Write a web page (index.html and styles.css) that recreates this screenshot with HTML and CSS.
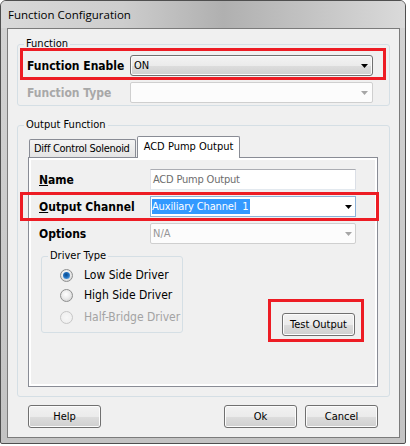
FILE: index.html
```html
<!DOCTYPE html>
<html>
<head>
<meta charset="utf-8">
<title>Function Configuration</title>
<link rel="stylesheet" href="styles.css">
</head>
<body>
<div class="window">
  <div class="titlebar"><span class="title">Function Configuration</span></div>
  <div class="client">
    <fieldset class="group g-func">
      <legend>Function</legend>
      <div class="frow frow-first hl">
        <span class="blabel">Function Enable</span>
        <div class="combo combo-btn"><span class="ctext">ON</span><svg class="arrow" width="7" height="4" viewBox="0 0 7 4"><path d="M0 0H7L3.5 4Z" fill="#000"/></svg></div>
      </div>
      <div class="frow frow-second">
        <span class="blabel dis">Function Type</span>
        <div class="combo combo-dis"><span class="ctext"></span><svg class="arrow" width="7" height="4" viewBox="0 0 7 4"><path d="M0 0H7L3.5 4Z" fill="#a6a6a6"/></svg></div>
      </div>
    </fieldset>

    <fieldset class="group g-out">
      <legend>Output Function</legend>
      <div class="tabs">
        <div class="tab">Diff Control Solenoid</div>
        <div class="tab active">ACD Pump Output</div>
      </div>
      <div class="panel">
        <div class="page">
          <div class="prow prow-name">
            <span class="plabel"><u>N</u>ame</span>
            <div class="textbox">ACD Pump Output</div>
          </div>
          <div class="prow prow-hl hl">
            <span class="plabel"><u>O</u>utput Channel</span>
            <div class="combo combo-edit"><span class="sel">Auxiliary Channel  1</span><svg class="arrow" width="7" height="4" viewBox="0 0 7 4"><path d="M0 0H7L3.5 4Z" fill="#000"/></svg></div>
          </div>
          <div class="prow prow-opt">
            <span class="plabel">Options</span>
            <div class="combo combo-dis combo-opt"><span class="ctext gray">N/A</span><svg class="arrow" width="7" height="4" viewBox="0 0 7 4"><path d="M0 0H7L3.5 4Z" fill="#a6a6a6"/></svg></div>
          </div>
          <div class="lower">
            <fieldset class="group driver">
              <legend>Driver Type</legend>
              <div class="radio r1"><span class="rb on"></span><span>Low Side Driver</span></div>
              <div class="radio r2"><span class="rb"></span><span>High Side Driver</span></div>
              <div class="radio r3 dis"><span class="rb off"></span><span>Half-Bridge Driver</span></div>
            </fieldset>
            <div class="testwrap hl">
              <button class="btn">Test Output</button>
            </div>
          </div>
        </div>
      </div>
    </fieldset>

    <div class="buttons">
      <button class="btn">Help</button>
      <span class="spacer"></span>
      <button class="btn">Ok</button>
      <button class="btn btn-gap">Cancel</button>
    </div>
  </div>
</div>
</body>
</html>
```

FILE: styles.css
```css
* { box-sizing: border-box; }
html, body { margin: 0; padding: 0; background: #fff; }
body {
  font-family: "DejaVu Sans Condensed", "DejaVu Sans", sans-serif;
  font-stretch: condensed;
  font-size: 11px;
  color: #000;
}

.window {
  width: 406px;
  height: 444px;
  border: 1px solid #4f4f4f;
  border-radius: 6px 6px 2px 2px;
  background: linear-gradient(#d3d3d3, #c3c3c3);
  padding: 0 5px 5px 6px;
  display: flex;
  flex-direction: column;
}

.titlebar {
  height: 27px;
  margin: 0 -5px 0 -6px;
  padding-left: 7px;
  border-radius: 5px 5px 0 0;
  background: linear-gradient(90deg, #d9d9d9 0%, #cdcdcd 30%, #b0b0b0 55%, #c2c2c2 75%, #dadada 100%);
  display: flex;
  align-items: center;
}
.title {
  font-family: "Open Sans", "Noto Sans", sans-serif;
  font-stretch: normal;
  font-size: 11.5px;
  line-height: 27px;
  color: #000;
}

.client {
  height: 410px;
  border: 1px solid #7b7b7b;
  background: #f0f0f0;
  display: flex;
  flex-direction: column;
}

.group {
  border: 1px solid #d5dfe5;
  border-radius: 3px;
  margin: 0;
  padding: 0;
  min-width: 0;
}
.group legend {
  padding: 0 2px;
  margin-left: 6px;
  font-size: 11px;
  line-height: 14px;
}

.hl { border: 3px solid #ed1c24; }

.g-func { margin: 8px 9px 0 9px; padding-bottom: 2px; }
.frow { display: flex; align-items: center; }
.frow-first { margin: -3px 3px 0 2px; padding: 4px 10px 1px 4px; }
.frow-second { margin: 0 3px 0 2px; padding: 2px 13px 0 7px; }

.blabel {
  width: 103px;
  flex: none;
  font-weight: bold;
  font-size: 12px;
}
.blabel.dis { color: #a8a8a8; }

.combo {
  flex: 1;
  height: 21px;
  display: flex;
  align-items: center;
  justify-content: space-between;
  padding: 0 4px 0 3px;
}
.combo-btn {
  border: 1px solid #707070;
  border-radius: 3px;
  background: linear-gradient(#f3f3f3 0%, #ebebeb 50%, #dddddd 51%, #d0d0d0 100%);
  box-shadow: inset 0 0 0 1px #fbfbfb;
}
.combo-dis {
  border: 1px solid #cfcfcf;
  border-radius: 2px;
  background: #fcfcfc;
}
.combo-edit {
  border: 1px solid #8db2d8;
  background: #fff;
  padding: 0 3px 0 1px;
}
.combo-opt { padding: 0 3px 0 2px; }
.ctext.gray { color: #969696; }
.sel {
  background: #3399ff;
  color: #fff;
  white-space: pre;
  line-height: 15px;
  padding-right: 1px;
  letter-spacing: -0.15px;
}
.arrow { flex: none; display: block; }

.g-out { margin: 12px 9px 0 9px; padding-bottom: 9px; }

.tabs {
  display: flex;
  align-items: flex-end;
  height: 21px;
  margin: 4px 11px 0 10px;
}
.tab {
  height: 18px;
  width: 107px;
  margin-left: 1px;
  border: 1px solid #898c95;
  border-bottom: none;
  border-radius: 2px 2px 0 0;
  padding-left: 4px;
  line-height: 17px;
  background: linear-gradient(#f4f4f4, #e4e4e4);
  white-space: nowrap;
  letter-spacing: -0.3px;
}
.tab.active {
  height: 22px;
  width: 103px;
  margin-bottom: -1px;
  padding: 0;
  line-height: 20px;
  text-align: center;
  background: #fff;
  position: relative;
  z-index: 1;
  letter-spacing: 0;
}

.panel {
  margin: 0 11px 0 10px;
  border: 1px solid #898c95;
  background: #fff;
  padding: 2px;
}
.page {
  height: 224px;
  background: #f0f0f0;
}

.prow { display: flex; align-items: center; padding: 0 19px 0 8px; }
.prow-name { padding-top: 9px; }
.prow-hl { margin: 2px -4px 0 -11px; padding: 1px 20px 1px 16px; }
.prow-opt { margin-top: 2px; }
.plabel {
  width: 111px;
  flex: none;
  font-weight: bold;
  font-size: 12px;
}
.textbox {
  flex: 1;
  height: 21px;
  border: 1px solid;
  border-color: #abadb3 #dbdfe6 #e3e9ef #e2e3ea;
  background: #fff;
  color: #6d6d6d;
  padding-left: 2px;
  line-height: 19px;
  letter-spacing: -0.2px;
}

.lower { display: flex; align-items: flex-start; margin-top: 5px; }
.driver { margin-left: 10px; width: 142px; padding-bottom: 5px; }
.radio {
  display: flex;
  align-items: center;
  height: 20px;
  padding-left: 18px;
  font-size: 12px;
  white-space: nowrap;
}
.radio.r1 { margin-top: 2px; }
.radio.r3 { margin-top: 2px; }
.radio.dis { color: #a3a3a3; }
.rb {
  width: 13px;
  height: 13px;
  flex: none;
  margin-right: 11px;
  border-radius: 50%;
  border: 1px solid #8e8f8f;
  background: radial-gradient(circle at 45% 40%, #ffffff 0%, #ececec 45%, #c8c8c8 100%);
  display: flex;
  align-items: center;
  justify-content: center;
}
.rb.on::after {
  content: "";
  width: 7px;
  height: 7px;
  border-radius: 50%;
  background: radial-gradient(circle at 45% 40%, #0d4a86 0%, #1f6fc0 45%, #7fbcea 100%);
}
.rb.off {
  border-color: #c6c6c6;
  background: radial-gradient(circle, #f7f7f7 0%, #ececec 100%);
}

.testwrap {
  margin: 50px 0 0 85px;
  padding: 11px 6px 3px 11px;
}

.btn {
  width: 73px;
  height: 23px;
  border: 1px solid #707070;
  border-radius: 3px;
  background: linear-gradient(#f2f2f2 0%, #ebebeb 50%, #dddddd 51%, #cfcfcf 100%);
  box-shadow: inset 0 0 0 1px #fcfcfc;
  font: inherit;
  color: #000;
  padding: 0;
  display: flex;
  align-items: center;
  justify-content: center;
  flex: none;
}

.buttons {
  display: flex;
  margin-top: 8px;
  padding: 0 21px 0 20px;
}
.spacer { flex: 1; }
.btn-gap { margin-left: 8px; }
```
